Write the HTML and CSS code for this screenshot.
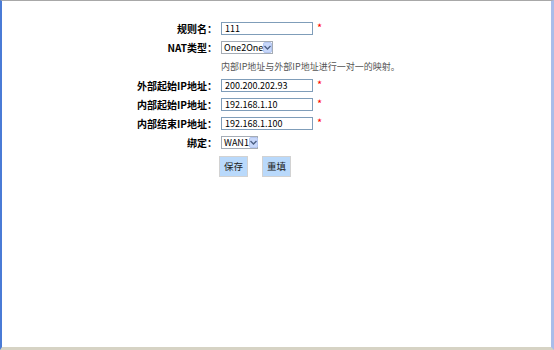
FILE: index.html
```html
<html><head><meta http-equiv="Content-Type" content="text/html; charset=UTF-8">
    <link rel="stylesheet" href="styles.css">
    <title>NAT</title>
</head>
<body>
    <div class="frame">
        <div class="form">
            <div class="row">
                <label class="name">规则名：</label>
                <input class="text" type="text" value="111"><span class="req">*</span>
            </div>
            <div class="row">
                <label class="name">NAT类型：</label>
                <div class="select sel-nat"><span class="val">One2One</span><span class="arrow"><svg width="7" height="5" viewBox="0 0 7 5"><path d="M0.5 1 L3.5 4 L6.5 1" fill="none" stroke="#4d6185" stroke-width="1.4"/></svg></span></div>
            </div>
            <div class="row">
                <label class="name"></label>
                <span class="hint">内部IP地址与外部IP地址进行一对一的映射。</span>
            </div>
            <div class="row">
                <label class="name">外部起始IP地址：</label>
                <input class="text" type="text" value="200.200.202.93"><span class="req">*</span>
            </div>
            <div class="row">
                <label class="name">内部起始IP地址：</label>
                <input class="text" type="text" value="192.168.1.10"><span class="req">*</span>
            </div>
            <div class="row">
                <label class="name">内部结束IP地址：</label>
                <input class="text" type="text" value="192.168.1.100"><span class="req">*</span>
            </div>
            <div class="row">
                <label class="name">绑定：</label>
                <div class="select sel-wan"><span class="val">WAN1</span><span class="arrow"><svg width="7" height="5" viewBox="0 0 7 5"><path d="M0.5 1 L3.5 4 L6.5 1" fill="none" stroke="#4d6185" stroke-width="1.4"/></svg></span></div>
            </div>
            <div class="row buttons">
                <label class="name"></label>
                <button>保存</button>
                <button>重填</button>
            </div>
        </div>
    </div>
</body></html>
```

FILE: styles.css
```css
* {
    box-sizing: border-box;
}

body {
    margin: 0;
    background: #ffffff;
    font-family: "Noto Sans CJK SC", "DejaVu Sans", sans-serif;
    font-size: 10px;
    color: #000;
}

.frame {
    width: 554px;
    height: 350px;
    border-top: 1px solid #a8a8a8;
    border-left: 2px solid #4a7bd6;
    border-right: 3px solid #a9bdea;
    border-bottom: 3px solid #d6d3c4;
    background: #fff;
}

.form {
    padding-top: 18px;
}

.row {
    display: flex;
    align-items: center;
    height: 18px;
    margin-bottom: 1px;
}

.name {
    width: 217px;
    padding-right: 2px;
    text-align: right;
    font-weight: bold;
    flex: none;
}

.text {
    width: 92px;
    height: 13px;
    margin: 0 0 0 2px;
    padding: 0 3px;
    border: 1px solid #7f9db9;
    font-family: "Noto Sans CJK SC", "DejaVu Sans", sans-serif;
    font-size: 9px;
    line-height: 11px;
    color: #000;
    outline: none;
}

.req {
    color: #ff0000;
    margin-left: 4px;
    font-size: 11px;
    line-height: 11px;
    margin-top: -2px;
}

.select {
    display: flex;
    align-items: center;
    height: 13px;
    margin-left: 2px;
    border: 1px solid #a5acb5;
    background: #fff;
}

.sel-nat {
    width: 52px;
}

.sel-wan {
    width: 37px;
}

.select .val {
    flex: 1;
    padding-left: 2px;
    font-size: 9px;
    line-height: 11px;
}

.select .arrow {
    width: 12px;
    height: 11px;
    display: flex;
    align-items: center;
    justify-content: center;
    background: #c8d8fb;
    border: 1px solid #b4c6f0;
    border-radius: 2px;
}

.hint {
    margin-left: 2px;
    color: #555;
    font-size: 9px;
}

.buttons {
    height: 22px;
    margin-top: 4px;
}

button {
    appearance: none;
    width: 29px;
    height: 21px;
    margin-left: 0;
    margin-right: 14px;
    padding: 0;
    background: #b9d9fb;
    border: 1px solid #d2d2d2;
    font-family: "Noto Sans CJK SC", "DejaVu Sans", sans-serif;
    font-size: 9.5px;
    color: #222;
}
```
